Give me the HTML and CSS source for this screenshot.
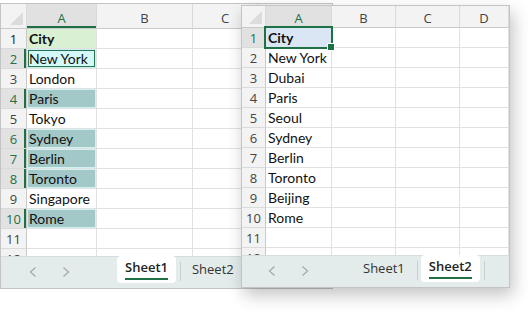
FILE: index.html
```html
<!DOCTYPE html>
<html>
<head>
<meta charset="utf-8">
<link rel="stylesheet" href="styles.css">
</head>
<body>
<div class="win win-left">
  <div class="sheet">
    <div class="grid grid-left">
      <div class="ch corner"><span class="tri"></span></div>
      <div class="ch sel">A</div>
      <div class="ch">B</div>
      <div class="ch">C</div>
      <div class="ch"></div>

      <div class="rh dark">1</div><div class="c city-l">City</div><div class="c"></div><div class="c"></div><div class="c"></div>
      <div class="rh hl">2</div><div class="c ny">New York</div><div class="c"></div><div class="c"></div><div class="c"></div>
      <div class="rh">3</div><div class="c">London</div><div class="c"></div><div class="c"></div><div class="c"></div>
      <div class="rh hl">4</div><div class="c teal">Paris</div><div class="c"></div><div class="c"></div><div class="c"></div>
      <div class="rh">5</div><div class="c">Tokyo</div><div class="c"></div><div class="c"></div><div class="c"></div>
      <div class="rh hl">6</div><div class="c teal">Sydney</div><div class="c"></div><div class="c"></div><div class="c"></div>
      <div class="rh hl">7</div><div class="c teal">Berlin</div><div class="c"></div><div class="c"></div><div class="c"></div>
      <div class="rh hl">8</div><div class="c teal">Toronto</div><div class="c"></div><div class="c"></div><div class="c"></div>
      <div class="rh">9</div><div class="c">Singapore</div><div class="c"></div><div class="c"></div><div class="c"></div>
      <div class="rh hl">10</div><div class="c teal">Rome</div><div class="c"></div><div class="c"></div><div class="c"></div>
      <div class="rh">11</div><div class="c"></div><div class="c"></div><div class="c"></div><div class="c"></div>
      <div class="rh">12</div><div class="c"></div><div class="c"></div><div class="c"></div><div class="c"></div>
    </div>
  </div>
  <div class="tabbar">
    <div class="nav">
      <svg class="arrow" width="8" height="10" viewBox="0 0 8 10"><path d="M6.5 0.5 L1.5 5 L6.5 9.5" fill="none" stroke="#a3a8a8" stroke-width="1.2"/></svg>
      <svg class="arrow" width="8" height="10" viewBox="0 0 8 10"><path d="M1.5 0.5 L6.5 5 L1.5 9.5" fill="none" stroke="#a3a8a8" stroke-width="1.2"/></svg>
    </div>
    <div class="tab active"><span class="lbl">Sheet1</span></div>
    <div class="sep"></div>
    <div class="tab"><span class="lbl">Sheet2</span></div>
  </div>
</div>

<div class="win win-right">
  <div class="sheet">
    <div class="grid grid-right">
      <div class="ch corner"><span class="tri"></span></div>
      <div class="ch sel-r">A</div>
      <div class="ch">B</div>
      <div class="ch">C</div>
      <div class="ch">D</div>

      <div class="rh hl-r">1</div><div class="c city-r"><b>City</b></div><div class="c"></div><div class="c"></div><div class="c"></div>
      <div class="rh">2</div><div class="c">New York</div><div class="c"></div><div class="c"></div><div class="c"></div>
      <div class="rh">3</div><div class="c">Dubai</div><div class="c"></div><div class="c"></div><div class="c"></div>
      <div class="rh">4</div><div class="c">Paris</div><div class="c"></div><div class="c"></div><div class="c"></div>
      <div class="rh">5</div><div class="c">Seoul</div><div class="c"></div><div class="c"></div><div class="c"></div>
      <div class="rh">6</div><div class="c">Sydney</div><div class="c"></div><div class="c"></div><div class="c"></div>
      <div class="rh">7</div><div class="c">Berlin</div><div class="c"></div><div class="c"></div><div class="c"></div>
      <div class="rh">8</div><div class="c">Toronto</div><div class="c"></div><div class="c"></div><div class="c"></div>
      <div class="rh">9</div><div class="c">Beijing</div><div class="c"></div><div class="c"></div><div class="c"></div>
      <div class="rh">10</div><div class="c">Rome</div><div class="c"></div><div class="c"></div><div class="c"></div>
      <div class="rh">11</div><div class="c"></div><div class="c"></div><div class="c"></div><div class="c"></div>
      <div class="rh">12</div><div class="c"></div><div class="c"></div><div class="c"></div><div class="c"></div>
    </div>
  </div>
  <div class="tabbar">
    <div class="nav">
      <svg class="arrow" width="8" height="10" viewBox="0 0 8 10"><path d="M6.5 0.5 L1.5 5 L6.5 9.5" fill="none" stroke="#a3a8a8" stroke-width="1.2"/></svg>
      <svg class="arrow" width="8" height="10" viewBox="0 0 8 10"><path d="M1.5 0.5 L6.5 5 L1.5 9.5" fill="none" stroke="#a3a8a8" stroke-width="1.2"/></svg>
    </div>
    <div class="tab"><span class="lbl">Sheet1</span></div>
    <div class="sep"></div>
    <div class="tab active"><span class="lbl">Sheet2</span></div>
    <div class="sep"></div>
  </div>
</div>
</body>
</html>
```

FILE: styles.css
```css
* { box-sizing: border-box; }

html, body {
  margin: 0;
  padding: 0;
  background: #ffffff;
}

body {
  position: relative;
  width: 528px;
  height: 314px;
  overflow: hidden;
  font-family: "Open Sans", "Noto Sans", sans-serif;
}

.win {
  position: absolute;
  display: flex;
  flex-direction: column;
  border: 1px solid #c4c4c4;
  background: #ffffff;
}

.win-left {
  left: 0;
  top: 3px;
  width: 333px;
  height: 286px;
}

.win-right {
  left: 241px;
  top: 5px;
  width: 269px;
  height: 283px;
  box-shadow: 3px 7px 16px rgba(0, 0, 0, 0.24);
}

.sheet {
  flex: 1;
  overflow: hidden;
}

.grid {
  display: grid;
  grid-auto-rows: 20px;
}

.grid-left {
  grid-template-columns: 26px 70px 96px 65px 96px;
  grid-template-rows: 25px;
}

.grid-right {
  grid-template-columns: 24px 66px 64px 64px 49px;
  grid-template-rows: 22px;
}

.ch {
  display: flex;
  align-items: flex-end;
  justify-content: center;
  background: #f3f3f3;
  border-right: 1px solid #dadada;
  border-bottom: 1px solid #c9c9c9;
  font-size: 13px;
  line-height: 18px;
  color: #444;
}

.grid-left .ch { padding-bottom: 1px; }

.ch.corner {
  position: relative;
  background: #f3f3f3;
}

.tri {
  position: absolute;
  right: 3px;
  bottom: 3px;
  width: 0;
  height: 0;
  border-left: 13px solid transparent;
  border-bottom: 13px solid #dcdcdc;
}

.ch.sel {
  background: #e1e1e1;
  color: #1e7145;
  box-shadow: inset 0 -2px 0 #1e7145;
}

.ch.sel-r {
  background: #e1e1e1;
  color: #1e7145;
}

.rh {
  display: flex;
  align-items: center;
  justify-content: center;
  background: #f3f3f3;
  border-right: 1px solid #c9c9c9;
  border-bottom: 1px solid #dadada;
  font-size: 13px;
  color: #444;
}

.rh.dark { color: #222; }

.rh.hl {
  background: #e2e2e2;
  color: #1e7145;
  box-shadow: inset -2px 0 0 #1e7145;
}

.rh.hl-r {
  background: #e1e1e1;
  color: #1e7145;
}

.c {
  border-right: 1px solid #e1e1e1;
  border-bottom: 1px solid #e1e1e1;
  font-family: "Lato", "Open Sans", sans-serif;
  font-size: 14px;
  line-height: 19px;
  padding-left: 2px;
  color: #111;
  white-space: nowrap;
}

.city-l {
  background: #d9f0d2;
  font-weight: bold;
}

.ny {
  background: #d4f8f8;
  box-shadow: inset 0 0 0 1px #cbeeee, inset 0 0 0 2px #257650;
}

.teal {
  background: #a3c8c8;
  box-shadow: inset 0 0 0 1px #d4f1f1;
}

.city-r {
  position: relative;
  background: #dae6f4;
  overflow: visible;
}

.city-r::after {
  content: "";
  position: absolute;
  left: -2px;
  top: -2px;
  right: -2px;
  bottom: -2px;
  border: 2px solid #1e7145;
}

.city-r::before {
  content: "";
  position: absolute;
  right: -4px;
  bottom: -4px;
  width: 6px;
  height: 6px;
  background: #1e7145;
  border: 1px solid #ffffff;
  z-index: 2;
}

.tabbar {
  flex: 0 0 32px;
  height: 32px;
  display: flex;
  align-items: flex-start;
  background: #e3ebeb;
  border-top: 1px solid #d5dddd;
}

.nav {
  display: flex;
  gap: 25px;
  padding-top: 10px;
}

.win-left .nav { width: 116px; padding-left: 28px; }
.win-right .nav { width: 113px; padding-left: 26px; }

.arrow { display: block; }

.tab {
  padding: 4px 8px 0;
  height: 27px;
  margin-top: -1px;
  font-size: 13px;
  line-height: 18px;
  color: #333;
}

.tab.active {
  background: #ffffff;
  border-radius: 4px;
  padding-top: 2px;
  font-weight: 600;
  color: #222;
}

.tab.active .lbl {
  display: inline-block;
  border-bottom: 2px solid #1e7145;
  padding-bottom: 2px;
}

.sep {
  width: 1px;
  height: 19px;
  margin: 5px 3px 0 4px;
  background: #c7cfcf;
}
```
